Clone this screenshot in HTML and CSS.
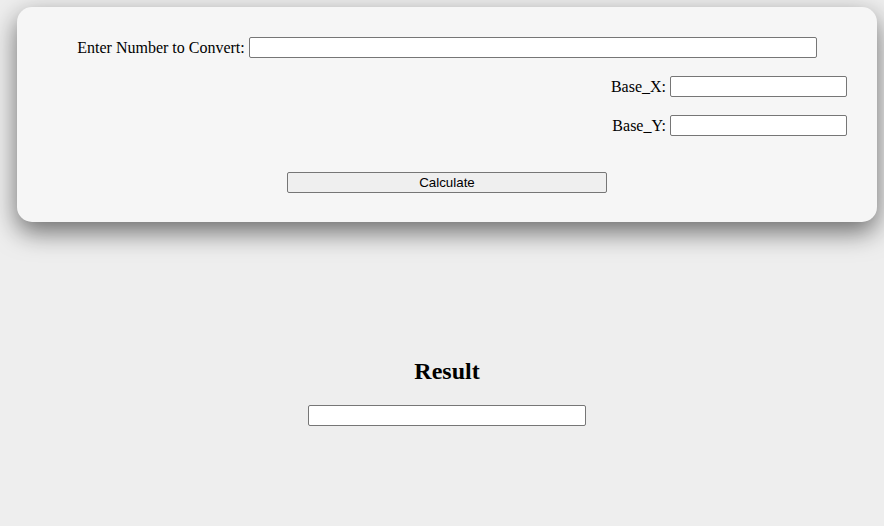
FILE: index.html
```html
<!DOCTYPE html>
<html>
<head>
<meta charset="utf-8">
<link rel="stylesheet" href="styles.css">
</head>
<body>
<div class="page">
  <form class="card">
    <div class="row row-center">
      <label for="num">Enter Number to Convert:</label>
      <input id="num" class="in-main" type="text">
    </div>
    <div class="row row-right">
      <label for="bx">Base_X:</label>
      <input id="bx" class="in-base" type="text">
    </div>
    <div class="row row-right">
      <label for="by">Base_Y:</label>
      <input id="by" class="in-base" type="text">
    </div>
    <div class="row row-center btn-row">
      <button type="button" class="calc">Calculate</button>
    </div>
  </form>
  <section class="result">
    <h2>Result</h2>
    <input class="in-result" type="text">
  </section>
</div>
</body>
</html>
```
FILE: styles.css
```css
html, body {
  margin: 0;
  padding: 0;
  background: #eeeeee;
  height: 100%;
}
body {
  font-family: "Liberation Serif", "Times New Roman", serif;
  font-size: 16px;
  color: #000;
}
.page {
  padding: 7px 7px 0 17px;
}
.card {
  background: #f6f6f6;
  border-radius: 15px;
  box-shadow: 0 10px 26px rgba(0, 0, 0, 0.55);
  padding: 30px 30px 29px 30px;
  display: flex;
  flex-direction: column;
  gap: 18px;
}
.row {
  display: flex;
  align-items: center;
  gap: 4px;
  height: 21px;
}
.row-center { justify-content: center; }
.row-right { justify-content: flex-end; }
.btn-row { margin-top: 18px; }
label { line-height: 18px; }
input {
  box-sizing: border-box;
  height: 21px;
  border: 1px solid #767676;
  border-radius: 2px;
  background: #fff;
  padding: 1px 2px;
  margin: 0;
  font: 13.33px "Liberation Sans", Arial, sans-serif;
}
.in-main { width: 568px; }
.in-base { width: 177px; }
.calc {
  box-sizing: border-box;
  width: 320px;
  height: 21px;
  margin: 0;
  padding: 0;
  border: 1px solid #767676;
  border-radius: 2px;
  background: #efefef;
  font: 13.33px "Liberation Sans", Arial, sans-serif;
  color: #000;
}
.result {
  margin-top: 135px;
  display: flex;
  flex-direction: column;
  align-items: center;
  gap: 20px;
}
.result h2 {
  margin: 0;
  font-size: 24px;
  line-height: 28px;
  font-weight: bold;
}
.in-result { width: 278px; }
```
